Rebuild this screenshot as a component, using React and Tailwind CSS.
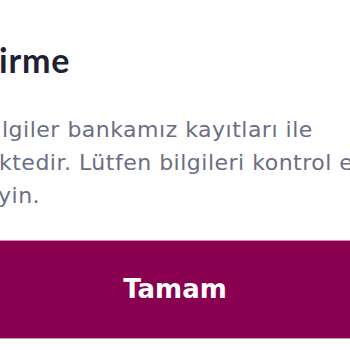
import React from 'react';

const App = () => {
  return (
    <div className="w-[350px] h-[350px] overflow-hidden bg-white font-['Lato',_'Noto_Sans',_sans-serif]">
      {/* Dialog (cropped on the left and right) */}
      <div className="pt-[40px]">
        <h2 className="ml-[-1px] whitespace-nowrap text-[34px] leading-[40px] font-bold tracking-[0.8px] text-[#1e2034]">
          irme
        </h2>

        <div className="mt-[33px] whitespace-nowrap font-['DejaVu_Sans',_sans-serif] text-[22px] leading-[33px] tracking-[0.5px] text-[#6b6e84]">
          <p className="ml-[2px]">lgiler bankamız kayıtları ile</p>
          <p className="ml-[-1px]">ktedir. Lütfen bilgileri kontrol ederek</p>
          <p className="ml-[-2px]">yin.</p>
        </div>

        <button className="mt-[28px] w-full h-[99px] bg-[#8a0050] border-t border-b border-t-[#d98cb5] border-b-[#b9a3b0] text-white font-['DejaVu_Sans',_sans-serif] text-[26px] font-bold">
          Tamam
        </button>
      </div>
    </div>
  );
};

export default App;
